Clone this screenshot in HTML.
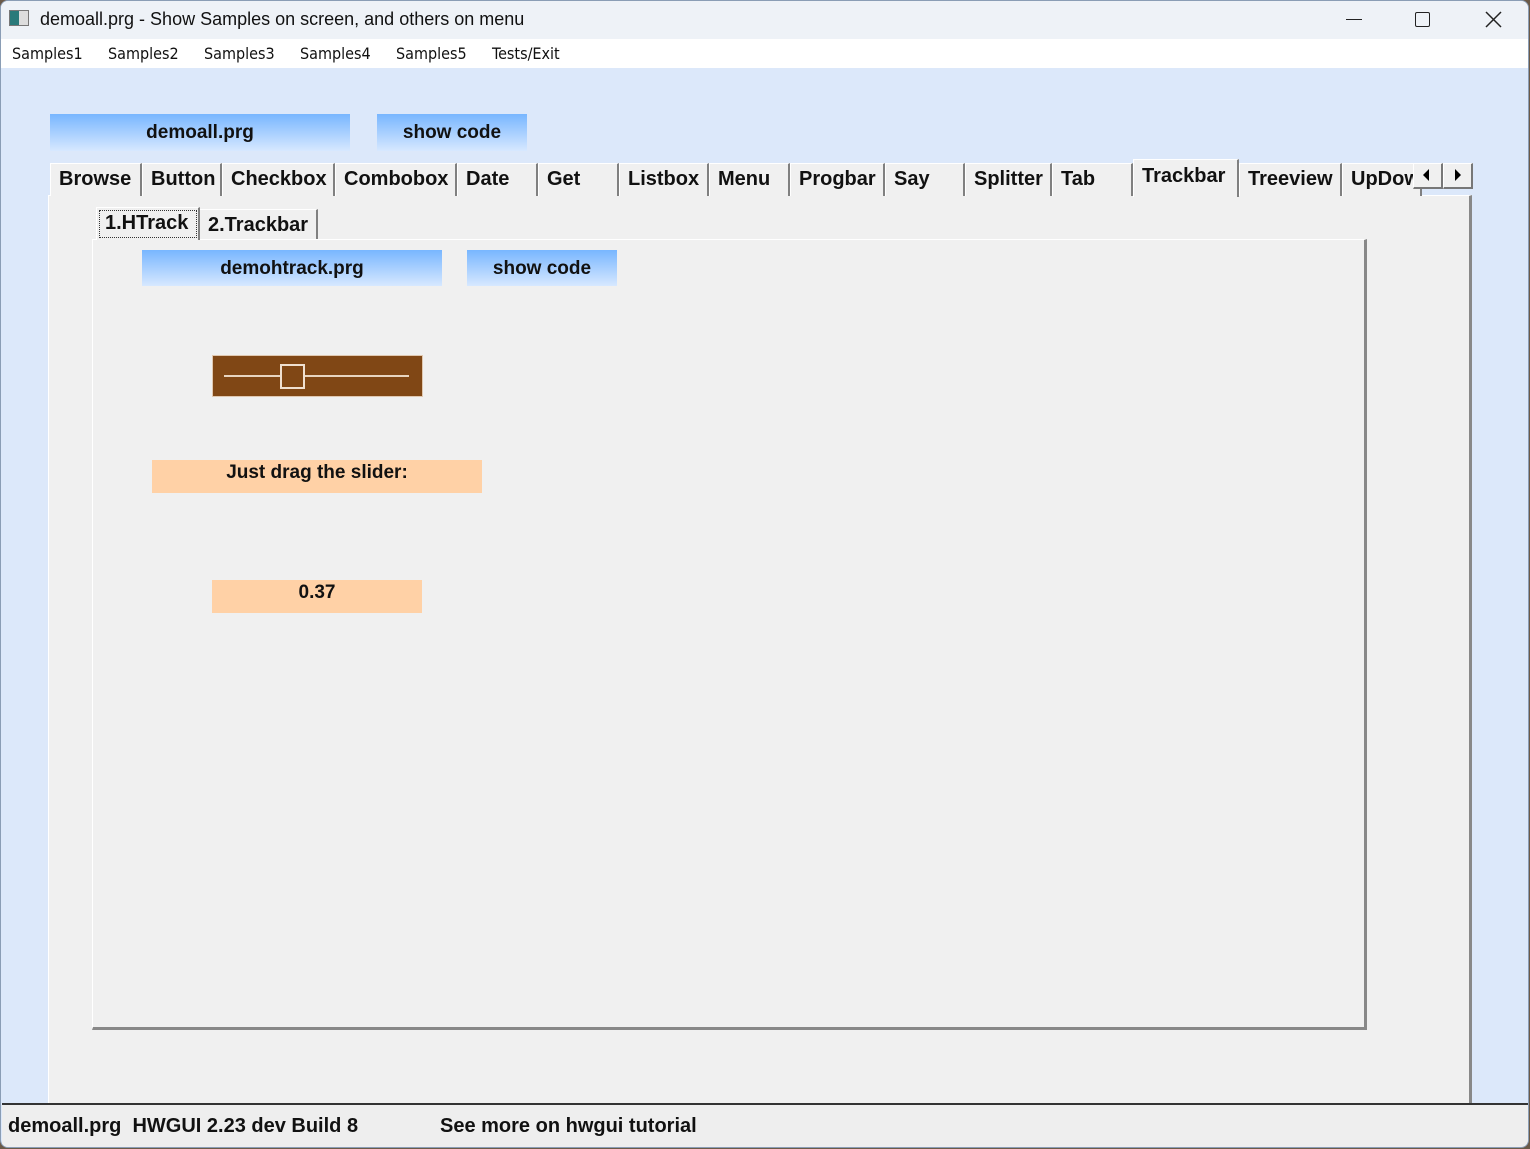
<!DOCTYPE html>
<html><head><meta charset="utf-8"><style>
*{margin:0;padding:0;box-sizing:border-box}
body{width:1530px;height:1149px;overflow:hidden;background:#6b5a48;position:relative;font-family:"Liberation Sans",sans-serif}
.a{position:absolute}
.win{left:0;top:0;width:1529px;height:1148px;background:#dce8fa;border:1px solid #8a9db5;border-radius:8px;overflow:hidden}
.title{left:-1px;top:-1px;width:1529px;height:39px;background:#eef2f7;font-size:18px;color:#111}
.menu{left:-1px;top:38px;width:1529px;height:29px;background:#fff;font-family:"DejaVu Sans Condensed","DejaVu Sans",sans-serif;font-size:16px;color:#111}
.menu span{position:absolute;top:5px}
.btn{background:linear-gradient(#78b6ff,#d7e8ff);font-weight:bold;font-size:19px;text-align:center;color:#111}
.tab{top:162px;height:33px;background:#f0f0f0;border-left:1px solid #fff;border-top:1px solid #fff;border-right:2px solid #808080;font-weight:bold;font-size:20px;padding:4px 0 0 8px;color:#111;white-space:nowrap;overflow:hidden}
.panel{background:#f0f0f0}
.lbl{background:#ffd1a6;font-weight:bold;font-size:19px;text-align:center;color:#111}
</style></head><body>
<div class="a win">
 <div class="a title">
  <div class="a" style="left:9px;top:10px;width:20px;height:16px;border:1px solid #777;background:linear-gradient(90deg,#2a7a7a 0 50%,#ddd 50%)"></div>
  <div class="a" style="left:40px;top:9px">demoall.prg - Show Samples on screen, and others on menu</div>
  <div class="a" style="left:1346px;top:19px;width:16px;height:1px;background:#222"></div>
  <div class="a" style="left:1415px;top:12px;width:15px;height:15px;border:1.5px solid #222;border-radius:2px"></div>
  <svg class="a" style="left:1485px;top:11px" width="17" height="17"><path d="M1 1L16 16M16 1L1 16" stroke="#222" stroke-width="1.5"/></svg>
 </div>
 <div class="a menu">
  <span style="left:12px">Samples1</span><span style="left:108px">Samples2</span><span style="left:204px">Samples3</span><span style="left:300px">Samples4</span><span style="left:396px">Samples5</span><span style="left:492px">Tests/Exit</span>
 </div>
 <div class="a btn" style="left:49px;top:113px;width:300px;height:37px;line-height:38px">demoall.prg</div>
 <div class="a btn" style="left:376px;top:113px;width:150px;height:37px;line-height:38px">show code</div>

 <div class="a panel" style="left:47px;top:194px;width:1424px;height:912px;border-left:1px solid #fff;border-top:1px solid #fff;border-right:3px solid #888"></div>
 <div class="a tab" style="left:49px;width:92px">Browse</div>
 <div class="a tab" style="left:141px;width:80px">Button</div>
 <div class="a tab" style="left:221px;width:113px">Checkbox</div>
 <div class="a tab" style="left:334px;width:122px">Combobox</div>
 <div class="a tab" style="left:456px;width:81px">Date</div>
 <div class="a tab" style="left:537px;width:81px">Get</div>
 <div class="a tab" style="left:618px;width:90px">Listbox</div>
 <div class="a tab" style="left:708px;width:81px">Menu</div>
 <div class="a tab" style="left:789px;width:95px">Progbar</div>
 <div class="a tab" style="left:884px;width:80px">Say</div>
 <div class="a tab" style="left:964px;width:87px">Splitter</div>
 <div class="a tab" style="left:1051px;width:81px">Tab</div>
 <div class="a tab" style="left:1132px;top:158px;height:38px;width:106px;border-bottom:none;padding-top:5px">Trackbar</div>
 <div class="a tab" style="left:1238px;width:103px">Treeview</div>
 <div class="a tab" style="left:1341px;width:80px">UpDown</div>
 <div class="a" style="left:1412px;top:162px;width:30px;height:26px;background:#f0f0f0;border:1px solid #fff;border-right:2px solid #777;border-bottom:2px solid #777"><svg width="26" height="22"><path d="M9 11L15 5V17Z" fill="#000"/></svg></div>
 <div class="a" style="left:1442px;top:162px;width:30px;height:26px;background:#f0f0f0;border:1px solid #fff;border-right:2px solid #777;border-bottom:2px solid #777"><svg width="26" height="22"><path d="M11 5L17 11L11 17Z" fill="#000"/></svg></div>

 <div class="a" style="left:91px;top:238px;width:1275px;height:791px;border-left:1px solid #fff;border-top:1px solid #fff;border-right:3px solid #888;border-bottom:3px solid #888"></div>
 <div class="a" style="left:95px;top:206px;width:104px;height:33px;border-left:1px solid #fff;border-top:1px solid #fff;border-right:2px solid #808080;font-weight:bold;font-size:20px;color:#111;background:#f0f0f0"><div style="position:absolute;left:2px;top:2px;width:98px;height:28px;border:1px dotted #333;padding:1px 0 0 5px">1.HTrack</div></div>
 <div class="a" style="left:199px;top:208px;width:118px;height:30px;border-top:1px solid #fff;border-right:2px solid #808080;font-weight:bold;font-size:20px;color:#111;padding:4px 0 0 8px">2.Trackbar</div>

 <div class="a btn" style="left:141px;top:249px;width:300px;height:36px;line-height:37px">demohtrack.prg</div>
 <div class="a btn" style="left:466px;top:249px;width:150px;height:36px;line-height:37px">show code</div>

 <div class="a" style="left:211px;top:354px;width:211px;height:42px;background:#804715;border:1px solid #e0c8b0"></div>
 <div class="a" style="left:223px;top:374px;width:185px;height:2px;background:#e8d5c0"></div>
 <div class="a" style="left:279px;top:363px;width:25px;height:25px;border:2px solid #f0e0d0;background:#804715"></div>

 <div class="a lbl" style="left:151px;top:459px;width:330px;height:33px;line-height:26px">Just drag the slider:</div>
 <div class="a lbl" style="left:211px;top:579px;width:210px;height:33px;line-height:26px">0.37</div>

 <div class="a" style="left:1px;top:1102px;width:1527px;height:46px;background:#eeeeee;border-top:2px solid #333;font-weight:bold;font-size:20px;color:#111">
  <span class="a" style="left:6px;top:10px">demoall.prg&nbsp; HWGUI 2.23 dev Build 8</span>
  <span class="a" style="left:438px;top:10px">See more on hwgui tutorial</span>
 </div>
</div>
</body></html>
